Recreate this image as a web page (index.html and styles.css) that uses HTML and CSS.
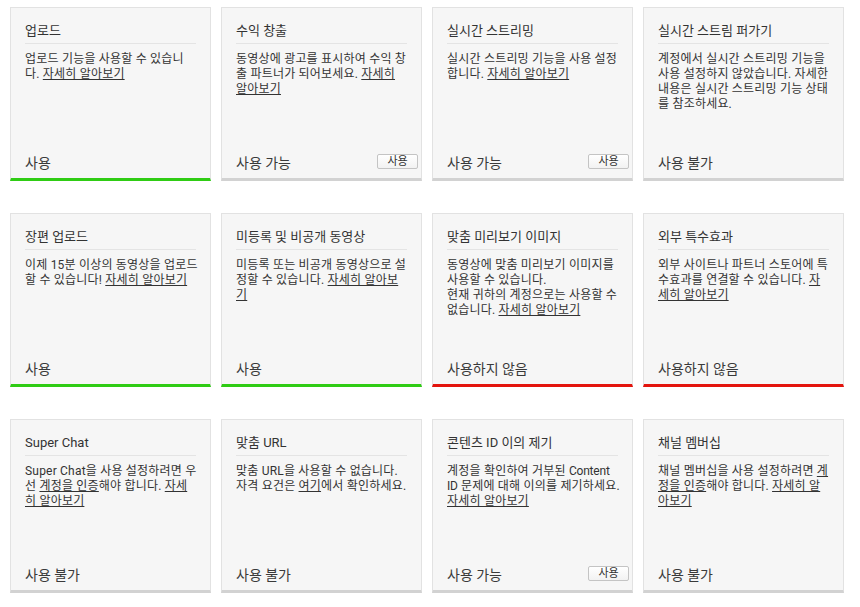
FILE: index.html
```html
<!DOCTYPE html>
<html lang="ko">
<head>
    <meta charset="UTF-8">
    <meta name="viewport" content="width=device-width, initial-scale=1.0">
    <title>채널 기능</title>
    <link rel="stylesheet" href="styles.css">
</head>
<body>
<div class="features">
    <div class="card on">
        <div class="card-head">업로드</div>
        <p class="card-desc">업로드 기능을 사용할 수 있습니다. <a href="#">자세히 알아보기</a></p>
        <div class="card-foot"><span class="status">사용</span></div>
    </div>
    <div class="card">
        <div class="card-head">수익 창출</div>
        <p class="card-desc">동영상에 광고를 표시하여 수익 창출 파트너가 되어보세요. <a href="#">자세히 알아보기</a></p>
        <div class="card-foot"><span class="status">사용 가능</span><button class="btn">사용</button></div>
    </div>
    <div class="card">
        <div class="card-head">실시간 스트리밍</div>
        <p class="card-desc">실시간 스트리밍 기능을 사용 설정합니다. <a href="#">자세히 알아보기</a></p>
        <div class="card-foot"><span class="status">사용 가능</span><button class="btn">사용</button></div>
    </div>
    <div class="card">
        <div class="card-head">실시간 스트림 퍼가기</div>
        <p class="card-desc">계정에서 실시간 스트리밍 기능을 사용 설정하지 않았습니다. 자세한 내용은 실시간 스트리밍 기능 상태를 참조하세요.</p>
        <div class="card-foot"><span class="status">사용 불가</span></div>
    </div>

    <div class="card on">
        <div class="card-head">장편 업로드</div>
        <p class="card-desc">이제 15분 이상의 동영상을 업로드할 수 있습니다! <a href="#">자세히 알아보기</a></p>
        <div class="card-foot"><span class="status">사용</span></div>
    </div>
    <div class="card on">
        <div class="card-head">미등록 및 비공개 동영상</div>
        <p class="card-desc">미등록 또는 비공개 동영상으로 설정할 수 있습니다. <a href="#">자세히 알아보기</a></p>
        <div class="card-foot"><span class="status">사용</span></div>
    </div>
    <div class="card off">
        <div class="card-head">맞춤 미리보기 이미지</div>
        <p class="card-desc">동영상에 맞춤 미리보기 이미지를 사용할 수 있습니다.<br>현재 귀하의 계정으로는 사용할 수 없습니다. <a href="#">자세히 알아보기</a></p>
        <div class="card-foot"><span class="status">사용하지 않음</span></div>
    </div>
    <div class="card off">
        <div class="card-head">외부 특수효과</div>
        <p class="card-desc">외부 사이트나 파트너 스토어에 특수효과를 연결할 수 있습니다. <a href="#">자세히 알아보기</a></p>
        <div class="card-foot"><span class="status">사용하지 않음</span></div>
    </div>

    <div class="card">
        <div class="card-head">Super Chat</div>
        <p class="card-desc">Super Chat을 사용 설정하려면 우선 <a href="#">계정을 인증</a>해야 합니다. <a href="#">자세히 알아보기</a></p>
        <div class="card-foot"><span class="status">사용 불가</span></div>
    </div>
    <div class="card">
        <div class="card-head">맞춤 URL</div>
        <p class="card-desc">맞춤 URL을 사용할 수 없습니다.<br>자격 요건은 <a href="#">여기</a>에서 확인하세요.</p>
        <div class="card-foot"><span class="status">사용 불가</span></div>
    </div>
    <div class="card">
        <div class="card-head">콘텐츠 ID 이의 제기</div>
        <p class="card-desc">계정을 확인하여 거부된 <span class="brand">Content ID</span> 문제에 대해 이의를 제기하세요. <a href="#">자세히 알아보기</a></p>
        <div class="card-foot"><span class="status">사용 가능</span><button class="btn">사용</button></div>
    </div>
    <div class="card">
        <div class="card-head">채널 멤버십</div>
        <p class="card-desc">채널 멤버십을 사용 설정하려면 <a href="#">계정을 인증</a>해야 합니다. <a href="#">자세히 알아보기</a></p>
        <div class="card-foot"><span class="status">사용 불가</span></div>
    </div>
</div>
</body>
</html>
```

FILE: styles.css
```css
* { box-sizing: border-box; }
body {
    margin: 0;
    background: #fff;
    color: #333;
    font-family: Roboto, "Noto Sans CJK KR", sans-serif;
}
.features {
    display: grid;
    grid-template-columns: repeat(4, 201px);
    column-gap: 10px;
    row-gap: 32px;
    padding: 7px 0 0 10px;
}
.card {
    height: 174px;
    display: flex;
    flex-direction: column;
    background: #f6f6f6;
    border: 1px solid #e2e2e2;
    border-bottom: 3px solid #d2d2d2;
}
.card.on { border-bottom-color: #2fcc14; }
.card.off { border-bottom-color: #e3140d; }
.card-head {
    margin: 0 14px;
    padding: 14px 0 3px;
    font-size: 13px;
    line-height: 18px;
    font-weight: 400;
    color: #333;
    border-bottom: 1px solid #e4e4e4;
}
.card-desc {
    flex: 1;
    margin: 8px 11.8px 0 14px;
    font-size: 12px;
    line-height: 15px;
    letter-spacing: 0.2px;
    color: #333;
}
.card-desc a { color: inherit; text-decoration: underline; }
.card-desc .brand { letter-spacing: -0.2px; }
.card-foot {
    height: 30px;
    display: flex;
    align-items: center;
    justify-content: space-between;
    padding: 0 3px 0 14px;
}
.status { font-size: 14px; color: #3a3a3a; margin-top: -3px; }
.btn {
    width: 41px;
    height: 15px;
    margin-top: -4px;
    padding: 0;
    font-family: Roboto, "Noto Sans CJK KR", sans-serif;
    font-size: 11px;
    line-height: 13px;
    color: #333;
    background: linear-gradient(#fff, #f2f2f2);
    border: 1px solid #c4c4c4;
    border-radius: 2px;
    cursor: pointer;
}
```
